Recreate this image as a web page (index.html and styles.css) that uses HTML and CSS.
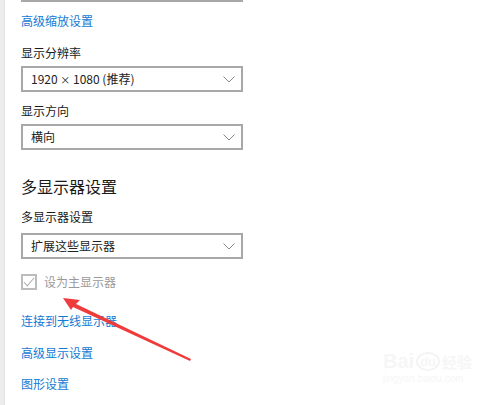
FILE: index.html
```html
<!DOCTYPE html>
<html lang="zh">
<head>
<meta charset="utf-8">
<link rel="stylesheet" href="styles.css">
</head>
<body>
<div class="page">
  <div class="gutter"></div>
  <main class="content">
    <div class="select partial"></div>
    <a class="link first">高级缩放设置</a>
    <div class="label">显示分辨率</div>
    <div class="select"><span>1920 <span class="times">×</span> 1080 (推荐)</span><svg class="chev" width="12" height="7" viewBox="0 0 12 7"><path d="M0.5 0.5 L6 6 L11.5 0.5" fill="none" stroke="#888" stroke-width="1"/></svg></div>
    <div class="label">显示方向</div>
    <div class="select"><span>横向</span><svg class="chev" width="12" height="7" viewBox="0 0 12 7"><path d="M0.5 0.5 L6 6 L11.5 0.5" fill="none" stroke="#888" stroke-width="1"/></svg></div>
    <h2 class="heading">多显示器设置</h2>
    <div class="label">多显示器设置</div>
    <div class="select"><span>扩展这些显示器</span><svg class="chev" width="12" height="7" viewBox="0 0 12 7"><path d="M0.5 0.5 L6 6 L11.5 0.5" fill="none" stroke="#888" stroke-width="1"/></svg></div>
    <div class="check">
      <span class="box"><svg width="14" height="12" viewBox="0 0 14 12"><path d="M1 6 L5 10.5 L13 1" fill="none" stroke="#b0b0b0" stroke-width="1.2"/></svg></span>
      <span class="check-label">设为主显示器</span>
    </div>
    <a class="link l1">连接到无线显示器</a>
    <a class="link l2">高级显示设置</a>
    <a class="link l3">图形设置</a>
  </main>
</div>
<svg class="arrow" width="500" height="405" viewBox="0 0 500 405">
  <polygon points="63,298 80,300 76,304 191,359 190,361 73,307 71,310" fill="#ef3b3b"/>
</svg>
<div class="watermark">
  <div class="wm-top"><span class="wm-bai">Bai</span><span class="wm-du">du</span><span class="wm-jy">经验</span></div>
  <div class="wm-url">jingyan.baidu.com</div>
</div>
</body>
</html>
```
FILE: styles.css
```css
* { box-sizing: border-box; }
html, body { margin: 0; padding: 0; background: #fff; }
body {
  width: 500px; height: 405px; overflow: hidden; position: relative;
  font-family: "Noto Sans CJK SC", "Noto Sans", sans-serif;
  color: #1a1a1a;
}
.page { display: flex; height: 405px; }
.gutter { width: 5px; background: #ececec; border-right: 1px solid #e2e2e2; flex: none; }
.content { padding-left: 16px; width: 244px; display: flex; flex-direction: column; }
.select {
  height: 26px; border: 2px solid #a8a8a8; background: #fff;
  display: flex; align-items: center; justify-content: space-between;
  padding: 0 6px 0 8px; font-size: 12px; line-height: 16px; color: #222; width: 222px;
}
.times { font-size: 10px; }
.select.partial { height: 4px; margin-top: -2px; border-top: none; }
.link { color: #1479d4; font-size: 12px; line-height: 16px; display: block; }
.link.first { margin-top: 11px; }
.label { font-size: 12px; line-height: 16px; margin: 0; }
.link.first + .label { margin-top: 16px; }
.label + .select { margin-top: 5px; }
.select + .label { margin-top: 11px; }
.heading { font-size: 16px; font-weight: 400; margin: 26px 0 0; line-height: 20px; }
.heading + .label { margin-top: 13px; }
.heading + .label + .select { margin-top: 8px; }
.check { display: flex; align-items: center; margin-top: 15px; height: 16px; }
.box { width: 16px; height: 16px; border: 2px solid #bcbcbc; display: flex; align-items: center; justify-content: center; flex: none; }
.check-label { color: #9a9a9a; font-size: 12px; line-height: 16px; margin-left: 7px; }
.link.l1 { margin-top: 23px; }
.link.l2 { margin-top: 16px; }
.link.l3 { margin-top: 15px; }
.arrow { position: absolute; left: 0; top: 0; pointer-events: none; }
.watermark { position: absolute; left: 383px; top: 350px; color: #f6f6f6; font-family: "Liberation Sans", sans-serif; }
.wm-top { font-size: 20px; font-weight: 700; display: flex; align-items: center; }
.wm-du { font-size: 13px; border: 2px solid #f4f4f4; border-radius: 50%; padding: 0 2px; margin: 0 2px; }
.wm-jy { font-family: "Noto Sans CJK SC", sans-serif; font-size: 15px; }
.wm-url { font-size: 10px; margin-top: 0; }
```
